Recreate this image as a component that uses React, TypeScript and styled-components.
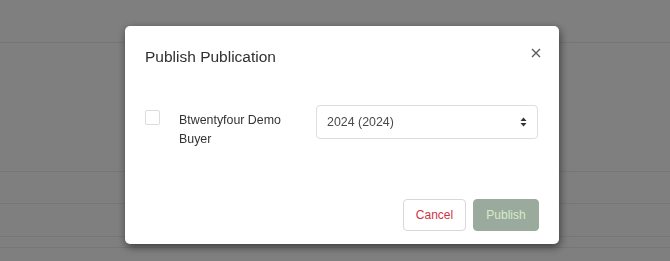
import React from "react";
import styled, { createGlobalStyle } from "styled-components";

const Global = createGlobalStyle`
  html, body { margin: 0; padding: 0; background: #ffffff; }
  body { font-family: "Liberation Sans", Arial, sans-serif; overflow: hidden; }
`;

const Page = styled.div`
  width: 670px;
  height: 261px;
  display: flex;
  flex-direction: column;
`;

const PageHeader = styled.div`
  height: 42px;
  border-bottom: 1px solid #ececec;
`;

const TableRow = styled.div<{ $h: number }>`
  height: ${(p) => p.$h}px;
  border-bottom: 1px solid #ececec;
  flex-shrink: 0;
`;

const Backdrop = styled.div`
  position: fixed;
  inset: 0;
  background: rgba(0, 0, 0, 0.5);
  padding: 26px 0 0 125px;
  box-sizing: border-box;
`;

const Modal = styled.div`
  width: 434px;
  height: 218px;
  background: #fff;
  border-radius: 5px;
  box-shadow: 1px 3px 8px rgba(0, 0, 0, 0.55);
  box-sizing: border-box;
  padding: 20px 20px 13px 20px;
  display: flex;
  flex-direction: column;
`;

const Header = styled.div`
  display: flex;
  justify-content: space-between;
  align-items: flex-start;
`;

const Title = styled.h2`
  margin: 1px 0 0 0;
  font-family: "Liberation Sans", Arial, sans-serif;
  font-weight: 400;
  font-size: 15.5px;
  line-height: 20px;
  color: #303030;
`;

const CloseButton = styled.button`
  border: none;
  background: none;
  padding: 0;
  margin: 0 -4px 0 0;
  width: 14px;
  height: 14px;
  display: flex;
  align-items: center;
  justify-content: center;
  cursor: pointer;
`;

const Body = styled.div`
  margin-top: 38px;
  display: flex;
  align-items: flex-start;
`;

const CheckBox = styled.span`
  width: 15px;
  height: 15px;
  border: 1px solid #dcdcdc;
  border-radius: 2px;
  box-sizing: border-box;
  margin: 5px 0 0 0;
  flex-shrink: 0;
`;

const Label = styled.div`
  margin: 6px 0 0 19px;
  width: 137px;
  font-size: 12.4px;
  line-height: 19px;
  color: #333;
`;

const Select = styled.div`
  width: 222px;
  height: 34px;
  box-sizing: border-box;
  border: 1px solid #dedede;
  border-radius: 4px;
  display: flex;
  align-items: center;
  justify-content: space-between;
  padding: 0 10px 0 10px;
  font-size: 12.4px;
  color: #4a4a4a;
`;

const Footer = styled.div`
  margin-top: auto;
  display: flex;
  justify-content: flex-end;
  gap: 7px;
`;

const Button = styled.button<{ $variant: "outline" | "primary" }>`
  height: 32px;
  border-radius: 4px;
  font-family: "Liberation Sans", Arial, sans-serif;
  font-size: 12px;
  font-weight: 400;
  padding: 0;
  cursor: pointer;
  ${(p) =>
    p.$variant === "outline"
      ? `width: 63px; background: #fff; border: 1px solid #d8d8d8; color: #cc3345;`
      : `width: 66px; background: #9aab9e; border: 1px solid #9aab9e; color: #d7ebc8;`}
`;

export default function App() {
  return (
    <>
      <Global />
      <Page>
        <PageHeader />
        <TableRow $h={128} />
        <TableRow $h={31} />
        <TableRow $h={32} />
        <TableRow $h={10} />
      </Page>
      <Backdrop>
        <Modal>
          <Header>
            <Title>Publish Publication</Title>
            <CloseButton aria-label="Close">
              <svg width="10" height="10" viewBox="0 0 10 10">
                <path d="M1 1L9 9M9 1L1 9" stroke="#5a5a5a" strokeWidth="1.4" />
              </svg>
            </CloseButton>
          </Header>
          <Body>
            <CheckBox />
            <Label>
              Btwentyfour Demo
              <br />
              Buyer
            </Label>
            <Select>
              <span>2024 (2024)</span>
              <svg width="7" height="10" viewBox="0 0 7 10">
                <path d="M3.5 0.5L6.5 4H0.5Z M3.5 9.5L6.5 6H0.5Z" fill="#333" />
              </svg>
            </Select>
          </Body>
          <Footer>
            <Button $variant="outline">Cancel</Button>
            <Button $variant="primary">Publish</Button>
          </Footer>
        </Modal>
      </Backdrop>
    </>
  );
}
